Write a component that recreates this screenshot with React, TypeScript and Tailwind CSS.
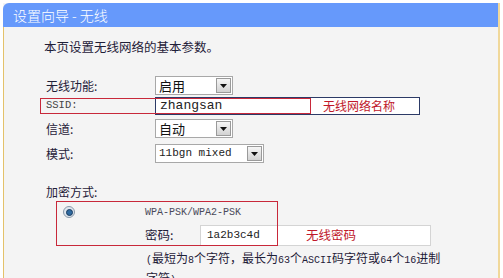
const cjk = "font-['Noto_Sans_CJK_SC',sans-serif]";
const mono = "font-['Liberation_Mono','Noto_Sans_CJK_SC',monospace]";

const Caret = () => (
  <span className="ml-auto mr-[1px] flex h-[15px] w-[15px] items-center justify-center border border-[#9a9a9a] bg-linear-to-b from-[#f6f6f6] to-[#d2d2d2]">
    <svg width="7" height="4" viewBox="0 0 7 4">
      <path d="M0 0h7L3.5 4z" fill="#111" />
    </svg>
  </span>
);

const Select = ({ value, w, isMono }: { value: string; w: string; isMono?: boolean }) => (
  <div className={`flex h-[19px] items-center border border-[#a8a8a8] bg-white pl-[3px] ${w}`}>
    <span className={isMono ? `${mono} text-[11px] text-[#222]` : `${cjk} text-[13px] leading-none text-[#111]`}>{value}</span>
    <Caret />
  </div>
);

export default function App() {
  return (
    <div className="h-[278px] w-[503px] overflow-hidden bg-white px-[3px] pt-[3px]">
      <div className="flex h-full flex-col border-r-2 border-[#f0d89a] bg-[#f4f4f4]">
        <div className={`flex h-[24px] shrink-0 items-center rounded-tl-[6px] bg-[#6699fb] pl-[10px] text-[14px] font-light text-white ${cjk}`}>
          设置向导 - 无线
        </div>
        <div className={`flex flex-1 flex-col border-l border-[#e4c26a] pl-[40px] text-[#1f2038] ${cjk}`}>
          <p className="mt-[11px] h-[17px] text-[12.5px] leading-[17px]">本页设置无线网络的基本参数。</p>

          <div className="mt-[21px] flex h-[19px] items-center">
            <span className="w-[111px] pl-[2px] text-[12px]">无线功能:</span>
            <Select value="启用" w="w-[78px]" />
          </div>

          <div className="relative mt-[2px] flex h-[18px] items-center">
            <span className={`w-[111px] pl-[2px] text-[10.5px] text-[#444] ${mono}`}>SSID:</span>
            <div className="flex h-[18px] w-[265px] items-center border border-[#2c3a66] bg-white pl-[4px]">
              <span className={`w-[155px] text-[13px] text-[#222] ${mono}`}>zhangsan</span>
              <span className="pl-[8px] text-[12px] text-[#c0182a]">无线网络名称</span>
            </div>
            <div className="pointer-events-none absolute left-[-4px] top-[1px] h-[16px] w-[271px] border border-[#c8283a]" />
          </div>

          <div className="mt-[4px] flex h-[19px] items-center">
            <span className="w-[111px] pl-[2px] text-[12px]">信道:</span>
            <Select value="自动" w="w-[78px]" />
          </div>

          <div className="mt-[6px] flex h-[19px] items-center">
            <span className="w-[111px] pl-[2px] text-[12px]">模式:</span>
            <Select value="11bgn mixed" w="w-[109px]" isMono />
          </div>

          <p className="mt-[21px] h-[16px] pl-[2px] text-[12px] leading-[16px]">加密方式:</p>

          <div className="relative mt-[1px] flex flex-col pl-[19px]">
            <div className="flex h-[22px] items-center">
              <span className="flex h-[12px] w-[12px] items-center justify-center rounded-full border border-[#8a9aaa] bg-[#dfe6ee]">
                <span className="h-[7px] w-[7px] rounded-full border border-[#173a5e] bg-[#2f6aa0]" />
              </span>
              <span className={`ml-[70px] text-[10px] text-[#4a4a5a] ${mono}`}>WPA-PSK/WPA2-PSK</span>
            </div>
            <div className="mt-[2px] flex h-[21px] items-center pl-[82px]">
              <span className="w-[55px] text-[12.5px]">密码:</span>
              <div className="flex h-[21px] w-[231px] items-center border border-[#d4d4d4] bg-white pl-[6px]">
                <span className={`w-[99px] text-[11px] text-[#222] ${mono}`}>1a2b3c4d</span>
                <span className="text-[12.5px] text-[#c0182a]">无线密码</span>
              </div>
            </div>
            <div className="pointer-events-none absolute left-[12px] top-[0px] h-[45px] w-[222px] border border-[#c8283a]" />
          </div>

          <p className="mt-[3px] pl-[102px] text-[12px] leading-[17px]">
            <span className={`${mono} text-[10px]`}>(</span>最短为<span className={`${mono} text-[10px]`}>8</span>个字符，最长为<span className={`${mono} text-[10px]`}>63</span>个<span className={`${mono} text-[10px]`}>ASCII</span>码字符或<span className={`${mono} text-[10px]`}>64</span>个<span className={`${mono} text-[10px]`}>16</span>进制
            <br />
            字符<span className={`${mono} text-[10px]`}>)</span>
          </p>
        </div>
      </div>
    </div>
  );
}
